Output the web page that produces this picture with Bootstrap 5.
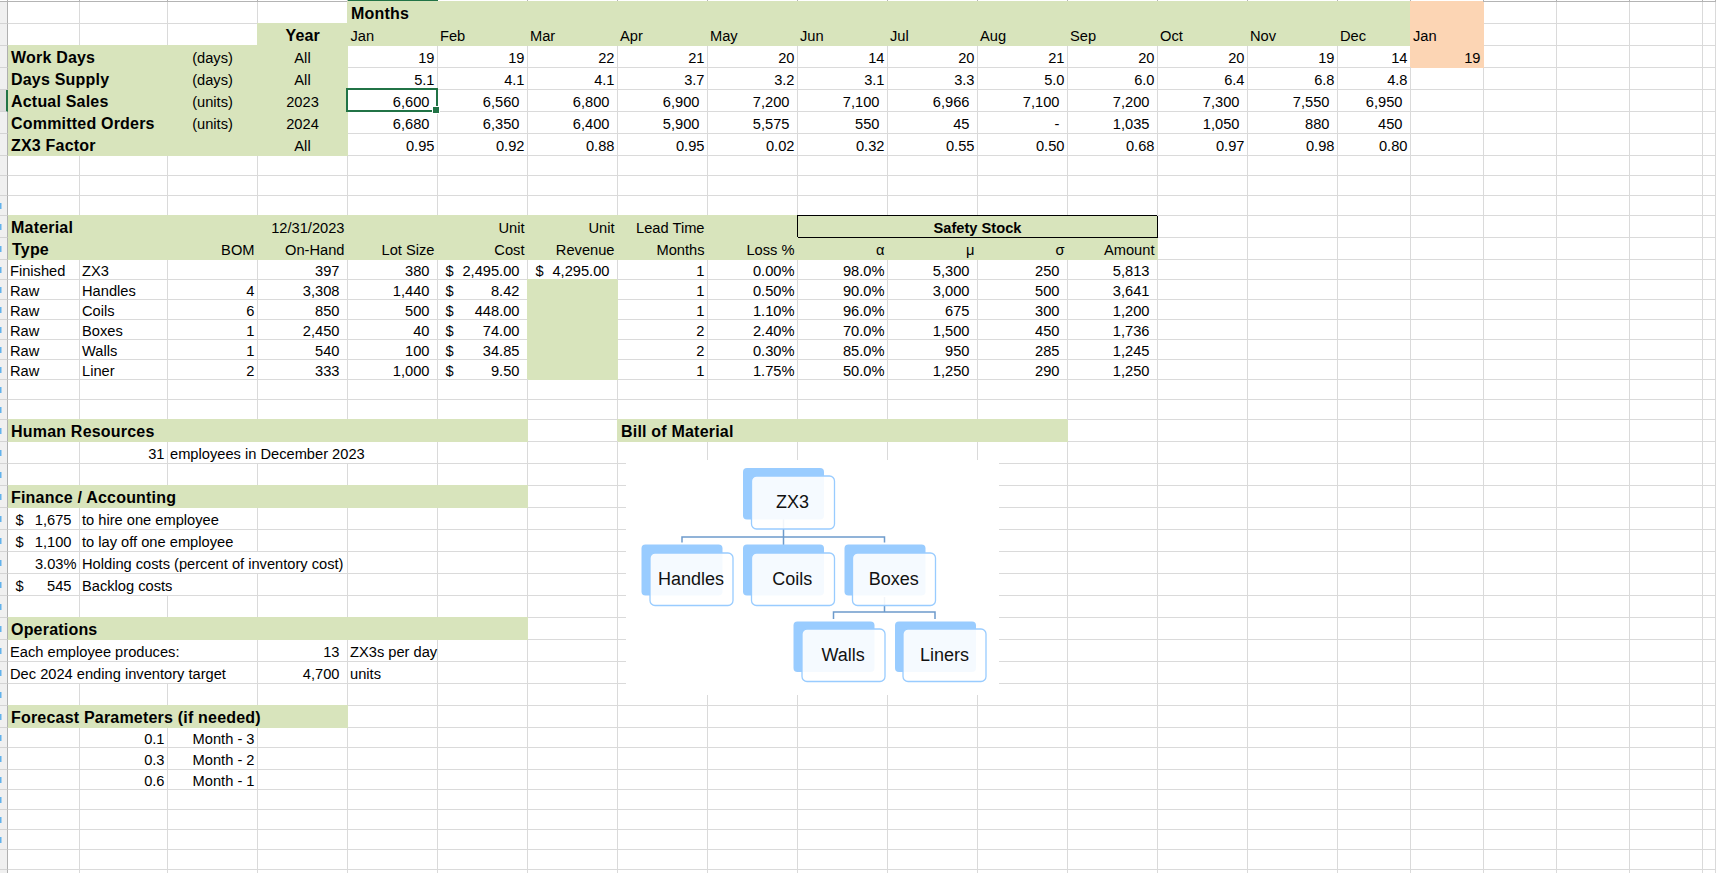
<!DOCTYPE html>
<html lang="en">
<head>
<meta charset="utf-8">
<title>ZX3 planning sheet</title>
<link href="https://cdn.jsdelivr.net/npm/bootstrap@5.3.0/dist/css/bootstrap.min.css" rel="stylesheet">
<style>
html,body{height:873px;overflow:hidden;background:#fff}
.sheet{table-layout:fixed;width:1716px;border-collapse:separate;border-spacing:0;font-family:"Liberation Sans",Arial,sans-serif;font-size:14.67px;line-height:16px;color:#000}
.sheet td{height:20px;padding:0 2.5px;border-style:solid;border-width:0 1px 1px 0;border-color:#dadada;vertical-align:bottom;white-space:nowrap;overflow:visible}
.sheet tr.r22 td{height:22px;padding-bottom:1px}
.sheet tr.strip td{height:2px;padding:0;line-height:0;font-size:0;border-color:#b4b4b4;background:#fff}
.sheet tr.strip td.cur{background:#217346;border-color:#217346}
.sheet td.gt{padding:0;background-color:#f0f0f0;border-right-color:#b0b0b0;border-bottom-color:#d4d4d4}
.sheet td.gt.mk{background:linear-gradient(#62b2ec,#62b2ec) 0 50%/1.5px 6px no-repeat,#f0f0f0}
.sheet td.gt.act{background:#dcdcdc;border-right:2px solid #217346}
.sheet td.fl{--f:#d8e4bc;background:var(--f);border-color:var(--f);box-shadow:-1px -1px 0 var(--f)}
.sheet td.fo{--f:#fcd5b4;background:var(--f);border-color:var(--f);box-shadow:-1px -1px 0 var(--f)}
.sheet td.gt+td.fl{box-shadow:0 -1px 0 var(--f)}
.sheet td.fl.under{box-shadow:-1px 0 0 var(--f)}
.sheet td.hd{font-size:16px;font-weight:700;letter-spacing:.2px;padding-left:3px;padding-bottom:1px}
.sheet td.ind{padding-left:4px}
.sheet td.ac{padding-right:7.5px}
.sheet td.acl{padding-left:7.5px;padding-right:7.5px}
.sheet td.lp{padding-left:2px}
.sheet td.ss{border-color:#000;box-shadow:-1px -1px 0 #000;font-weight:700;--f:#d8e4bc}
.sheet td.sel{position:relative}
.sheet td.sel::before{content:"";position:absolute;left:-2px;top:-2px;right:-1px;bottom:-1px;border:2px solid #217346}
.sheet td.sel::after{content:"";position:absolute;right:-2px;bottom:-2px;width:6px;height:6px;background:#217346;outline:1px solid #fff}
.bom{left:626px;top:460px;background:#fff}
.bom .back{fill:#99ccff}
.bom .front{fill:#fff;fill-opacity:.9;stroke:#99ccff;stroke-width:1.3}
.bom .link{fill:none;stroke:#6d9bcc;stroke-width:1.5}
.bom text{font-family:"Liberation Sans",Arial,sans-serif;font-size:18px;text-anchor:middle;fill:#111}
</style>
</head>
<body class="m-0">
<div class="position-relative">
<table class="sheet m-0">
<colgroup><col width="8"><col width="72"><col width="88"><col width="90"><col width="90"><col width="90"><col width="90"><col width="90"><col width="90"><col width="90"><col width="90"><col width="90"><col width="90"><col width="90"><col width="90"><col width="90"><col width="73"><col width="73"><col width="73"><col width="73"><col width="73"><col width="13"></colgroup>
<tbody>
<tr class="strip"><td><td><td><td><td><td class="cur"><td><td><td><td><td><td><td><td><td><td><td><td><td><td><td><td></tr>
<tr class="r22"><td class="gt"><td><td><td><td><td class="fl hd" colspan="12">Months</td><td class="fo"><td><td><td><td></tr>
<tr class="r22"><td class="gt"><td><td><td><td class="fl hd text-center">Year</td><td class="fl">Jan</td><td class="fl lp">Feb</td><td class="fl lp">Mar</td><td class="fl lp">Apr</td><td class="fl lp">May</td><td class="fl lp">Jun</td><td class="fl lp">Jul</td><td class="fl lp">Aug</td><td class="fl lp">Sep</td><td class="fl lp">Oct</td><td class="fl lp">Nov</td><td class="fl lp">Dec</td><td class="fo lp">Jan</td><td><td><td><td></tr>
<tr class="r22"><td class="gt"><td class="fl hd" colspan="2">Work Days</td><td class="fl text-center">(days)</td><td class="fl text-center">All</td><td class="text-end">19</td><td class="text-end">19</td><td class="text-end">22</td><td class="text-end">21</td><td class="text-end">20</td><td class="text-end">14</td><td class="text-end">20</td><td class="text-end">21</td><td class="text-end">20</td><td class="text-end">20</td><td class="text-end">19</td><td class="text-end">14</td><td class="fo text-end">19</td><td><td><td><td></tr>
<tr class="r22"><td class="gt"><td class="fl hd" colspan="2">Days Supply</td><td class="fl text-center">(days)</td><td class="fl text-center">All</td><td class="text-end">5.1</td><td class="text-end">4.1</td><td class="text-end">4.1</td><td class="text-end">3.7</td><td class="text-end">3.2</td><td class="text-end">3.1</td><td class="text-end">3.3</td><td class="text-end">5.0</td><td class="text-end">6.0</td><td class="text-end">6.4</td><td class="text-end">6.8</td><td class="text-end">4.8</td><td><td><td><td><td></tr>
<tr class="r22"><td class="gt act"><td class="fl hd" colspan="2">Actual Sales</td><td class="fl text-center">(units)</td><td class="fl text-center">2023</td><td class="text-end ac sel">6,600</td><td class="text-end ac">6,560</td><td class="text-end ac">6,800</td><td class="text-end ac">6,900</td><td class="text-end ac">7,200</td><td class="text-end ac">7,100</td><td class="text-end ac">6,966</td><td class="text-end ac">7,100</td><td class="text-end ac">7,200</td><td class="text-end ac">7,300</td><td class="text-end ac">7,550</td><td class="text-end ac">6,950</td><td><td><td><td><td></tr>
<tr class="r22"><td class="gt"><td class="fl hd" colspan="2">Committed Orders</td><td class="fl text-center">(units)</td><td class="fl text-center">2024</td><td class="text-end ac">6,680</td><td class="text-end ac">6,350</td><td class="text-end ac">6,400</td><td class="text-end ac">5,900</td><td class="text-end ac">5,575</td><td class="text-end ac">550</td><td class="text-end ac">45</td><td class="text-end ac">-</td><td class="text-end ac">1,035</td><td class="text-end ac">1,050</td><td class="text-end ac">880</td><td class="text-end ac">450</td><td><td><td><td><td></tr>
<tr class="r22"><td class="gt"><td class="fl hd" colspan="3">ZX3 Factor</td><td class="fl text-center">All</td><td class="text-end">0.95</td><td class="text-end">0.92</td><td class="text-end">0.88</td><td class="text-end">0.95</td><td class="text-end">0.02</td><td class="text-end">0.32</td><td class="text-end">0.55</td><td class="text-end">0.50</td><td class="text-end">0.68</td><td class="text-end">0.97</td><td class="text-end">0.98</td><td class="text-end">0.80</td><td><td><td><td><td></tr>
<tr><td class="gt"><td><td><td><td><td><td><td><td><td><td><td><td><td><td><td><td><td><td><td><td><td></tr>
<tr><td class="gt"><td><td><td><td><td><td><td><td><td><td><td><td><td><td><td><td><td><td><td><td><td></tr>
<tr><td class="gt mk"><td><td><td><td><td><td><td><td><td><td><td><td><td><td><td><td><td><td><td><td><td></tr>
<tr class="r22"><td class="gt mk"><td class="fl hd" colspan="3">Material</td><td class="fl text-end">12/31/2023</td><td class="fl"><td class="fl text-end">Unit</td><td class="fl text-end">Unit</td><td class="fl text-end">Lead Time</td><td class="fl"><td class="fl ss text-center" colspan="4">Safety Stock</td><td><td><td><td><td><td><td><td></tr>
<tr class="r22"><td class="gt mk"><td class="fl hd ind" colspan="2">Type</td><td class="fl text-end">BOM</td><td class="fl text-end">On-Hand</td><td class="fl text-end">Lot Size</td><td class="fl text-end">Cost</td><td class="fl text-end">Revenue</td><td class="fl text-end">Months</td><td class="fl text-end">Loss %</td><td class="fl under text-end">α</td><td class="fl under text-end">μ</td><td class="fl under text-end">σ</td><td class="fl under text-end">Amount</td><td><td><td><td><td><td><td><td></tr>
<tr><td class="gt mk"><td class="lp">Finished</td><td class="lp">ZX3</td><td><td class="text-end ac">397</td><td class="text-end ac">380</td><td class="acl"><div class="d-flex justify-content-between"><span>$</span><span>2,495.00</span></div></td><td class="acl"><div class="d-flex justify-content-between"><span>$</span><span>4,295.00</span></div></td><td class="text-end">1</td><td class="text-end">0.00%</td><td class="text-end">98.0%</td><td class="text-end ac">5,300</td><td class="text-end ac">250</td><td class="text-end ac">5,813</td><td><td><td><td><td><td><td><td></tr>
<tr><td class="gt mk"><td class="lp">Raw</td><td class="lp">Handles</td><td class="text-end">4</td><td class="text-end ac">3,308</td><td class="text-end ac">1,440</td><td class="acl"><div class="d-flex justify-content-between"><span>$</span><span>8.42</span></div></td><td class="fl"><td class="text-end">1</td><td class="text-end">0.50%</td><td class="text-end">90.0%</td><td class="text-end ac">3,000</td><td class="text-end ac">500</td><td class="text-end ac">3,641</td><td><td><td><td><td><td><td><td></tr>
<tr><td class="gt mk"><td class="lp">Raw</td><td class="lp">Coils</td><td class="text-end">6</td><td class="text-end ac">850</td><td class="text-end ac">500</td><td class="acl"><div class="d-flex justify-content-between"><span>$</span><span>448.00</span></div></td><td class="fl"><td class="text-end">1</td><td class="text-end">1.10%</td><td class="text-end">96.0%</td><td class="text-end ac">675</td><td class="text-end ac">300</td><td class="text-end ac">1,200</td><td><td><td><td><td><td><td><td></tr>
<tr><td class="gt mk"><td class="lp">Raw</td><td class="lp">Boxes</td><td class="text-end">1</td><td class="text-end ac">2,450</td><td class="text-end ac">40</td><td class="acl"><div class="d-flex justify-content-between"><span>$</span><span>74.00</span></div></td><td class="fl"><td class="text-end">2</td><td class="text-end">2.40%</td><td class="text-end">70.0%</td><td class="text-end ac">1,500</td><td class="text-end ac">450</td><td class="text-end ac">1,736</td><td><td><td><td><td><td><td><td></tr>
<tr><td class="gt mk"><td class="lp">Raw</td><td class="lp">Walls</td><td class="text-end">1</td><td class="text-end ac">540</td><td class="text-end ac">100</td><td class="acl"><div class="d-flex justify-content-between"><span>$</span><span>34.85</span></div></td><td class="fl"><td class="text-end">2</td><td class="text-end">0.30%</td><td class="text-end">85.0%</td><td class="text-end ac">950</td><td class="text-end ac">285</td><td class="text-end ac">1,245</td><td><td><td><td><td><td><td><td></tr>
<tr><td class="gt mk"><td class="lp">Raw</td><td class="lp">Liner</td><td class="text-end">2</td><td class="text-end ac">333</td><td class="text-end ac">1,000</td><td class="acl"><div class="d-flex justify-content-between"><span>$</span><span>9.50</span></div></td><td class="fl"><td class="text-end">1</td><td class="text-end">1.75%</td><td class="text-end">50.0%</td><td class="text-end ac">1,250</td><td class="text-end ac">290</td><td class="text-end ac">1,250</td><td><td><td><td><td><td><td><td></tr>
<tr><td class="gt mk"><td><td><td><td><td><td><td><td><td><td><td><td><td><td><td><td><td><td><td><td><td></tr>
<tr><td class="gt mk"><td><td><td><td><td><td><td><td><td><td><td><td><td><td><td><td><td><td><td><td><td></tr>
<tr class="r22"><td class="gt mk"><td class="fl hd" colspan="6">Human Resources</td><td><td class="fl hd" colspan="5">Bill of Material</td><td><td><td><td><td><td><td><td><td></tr>
<tr class="r22"><td class="gt mk"><td><td class="text-end">31</td><td colspan="3" class="lp">employees in December 2023</td><td><td><td><td><td><td><td><td><td><td><td><td><td><td><td><td></tr>
<tr class="r22"><td class="gt mk"><td><td><td><td><td><td><td><td><td><td><td><td><td><td><td><td><td><td><td><td><td></tr>
<tr class="r22"><td class="gt mk"><td class="fl hd" colspan="6">Finance / Accounting</td><td><td><td><td><td><td><td><td><td><td><td><td><td><td><td></tr>
<tr class="r22"><td class="gt mk"><td class="acl"><div class="d-flex justify-content-between"><span>$</span><span>1,675</span></div></td><td colspan="2" class="lp">to hire one employee</td><td><td><td><td><td><td><td><td><td><td><td><td><td><td><td><td><td><td></tr>
<tr class="r22"><td class="gt mk"><td class="acl"><div class="d-flex justify-content-between"><span>$</span><span>1,100</span></div></td><td colspan="2" class="lp">to lay off one employee</td><td><td><td><td><td><td><td><td><td><td><td><td><td><td><td><td><td><td></tr>
<tr class="r22"><td class="gt mk"><td class="text-end">3.03%</td><td colspan="3" class="lp">Holding costs (percent of inventory cost)</td><td><td><td><td><td><td><td><td><td><td><td><td><td><td><td><td><td></tr>
<tr class="r22"><td class="gt mk"><td class="acl"><div class="d-flex justify-content-between"><span>$</span><span>545</span></div></td><td colspan="2" class="lp">Backlog costs</td><td><td><td><td><td><td><td><td><td><td><td><td><td><td><td><td><td><td></tr>
<tr class="r22"><td class="gt mk"><td><td><td><td><td><td><td><td><td><td><td><td><td><td><td><td><td><td><td><td><td></tr>
<tr class="r22"><td class="gt mk"><td class="fl hd" colspan="6">Operations</td><td><td><td><td><td><td><td><td><td><td><td><td><td><td><td></tr>
<tr class="r22"><td class="gt mk"><td colspan="3" class="lp">Each employee produces:</td><td class="text-end ac">13</td><td class="lp">ZX3s per day</td><td><td><td><td><td><td><td><td><td><td><td><td><td><td><td><td></tr>
<tr class="r22"><td class="gt mk"><td colspan="3" class="lp">Dec 2024 ending inventory target</td><td class="text-end ac">4,700</td><td class="lp">units</td><td><td><td><td><td><td><td><td><td><td><td><td><td><td><td><td></tr>
<tr class="r22"><td class="gt mk"><td><td><td><td><td><td><td><td><td><td><td><td><td><td><td><td><td><td><td><td><td></tr>
<tr class="r22"><td class="gt mk"><td class="fl hd" colspan="4">Forecast Parameters (if needed)</td><td><td><td><td><td><td><td><td><td><td><td><td><td><td><td><td><td><td></tr>
<tr><td class="gt mk"><td><td class="text-end">0.1</td><td class="text-end">Month - 3</td><td><td><td><td><td><td><td><td><td><td><td><td><td><td><td><td><td><td></tr>
<tr class="r22"><td class="gt mk"><td><td class="text-end">0.3</td><td class="text-end">Month - 2</td><td><td><td><td><td><td><td><td><td><td><td><td><td><td><td><td><td><td></tr>
<tr><td class="gt mk"><td><td class="text-end">0.6</td><td class="text-end">Month - 1</td><td><td><td><td><td><td><td><td><td><td><td><td><td><td><td><td><td><td></tr>
<tr><td class="gt mk"><td><td><td><td><td><td><td><td><td><td><td><td><td><td><td><td><td><td><td><td><td></tr>
<tr><td class="gt mk"><td><td><td><td><td><td><td><td><td><td><td><td><td><td><td><td><td><td><td><td><td></tr>
<tr><td class="gt mk"><td><td><td><td><td><td><td><td><td><td><td><td><td><td><td><td><td><td><td><td><td></tr>
<tr><td class="gt"><td><td><td><td><td><td><td><td><td><td><td><td><td><td><td><td><td><td><td><td><td></tr>
<tr><td class="gt"><td><td><td><td><td><td><td><td><td><td><td><td><td><td><td><td><td><td><td><td><td></tr>
</tbody>
</table>
<svg class="bom position-absolute" width="373" height="235" viewBox="626 460 373 235" role="img" aria-label="Bill of material tree">
<path class="link" d="M783.5 510V553M682 542.5V537H884.5V542.5"/>
<path class="link" d="M884.5 597V612M833.5 619V612H935V619"/>
<rect class="back" x="743" y="468" width="81" height="51.5" rx="4"/>
<rect class="front" x="751.5" y="476" width="83" height="53" rx="5"/>
<rect class="back" x="641.5" y="544.5" width="81" height="51" rx="4"/>
<rect class="front" x="650" y="553" width="83" height="52.5" rx="5"/>
<rect class="back" x="743" y="544.5" width="81" height="51" rx="4"/>
<rect class="front" x="751.5" y="553" width="83" height="52.5" rx="5"/>
<rect class="back" x="844.5" y="544.5" width="81" height="51" rx="4"/>
<rect class="front" x="852.5" y="553" width="83" height="52.5" rx="5"/>
<rect class="back" x="793.5" y="621.5" width="81" height="50.5" rx="4"/>
<rect class="front" x="802" y="629" width="83" height="52.5" rx="5"/>
<rect class="back" x="895" y="621.5" width="81" height="50.5" rx="4"/>
<rect class="front" x="903" y="629" width="83" height="52.5" rx="5"/>
<text x="792.5" y="508">ZX3</text>
<text x="691" y="584.5">Handles</text>
<text x="792.3" y="584.5">Coils</text>
<text x="893.8" y="584.5">Boxes</text>
<text x="843.2" y="661">Walls</text>
<text x="944.5" y="661">Liners</text>
</svg>
</div>
<script src="https://cdn.jsdelivr.net/npm/bootstrap@5.3.0/dist/js/bootstrap.bundle.min.js"></script>
</body>
</html>
